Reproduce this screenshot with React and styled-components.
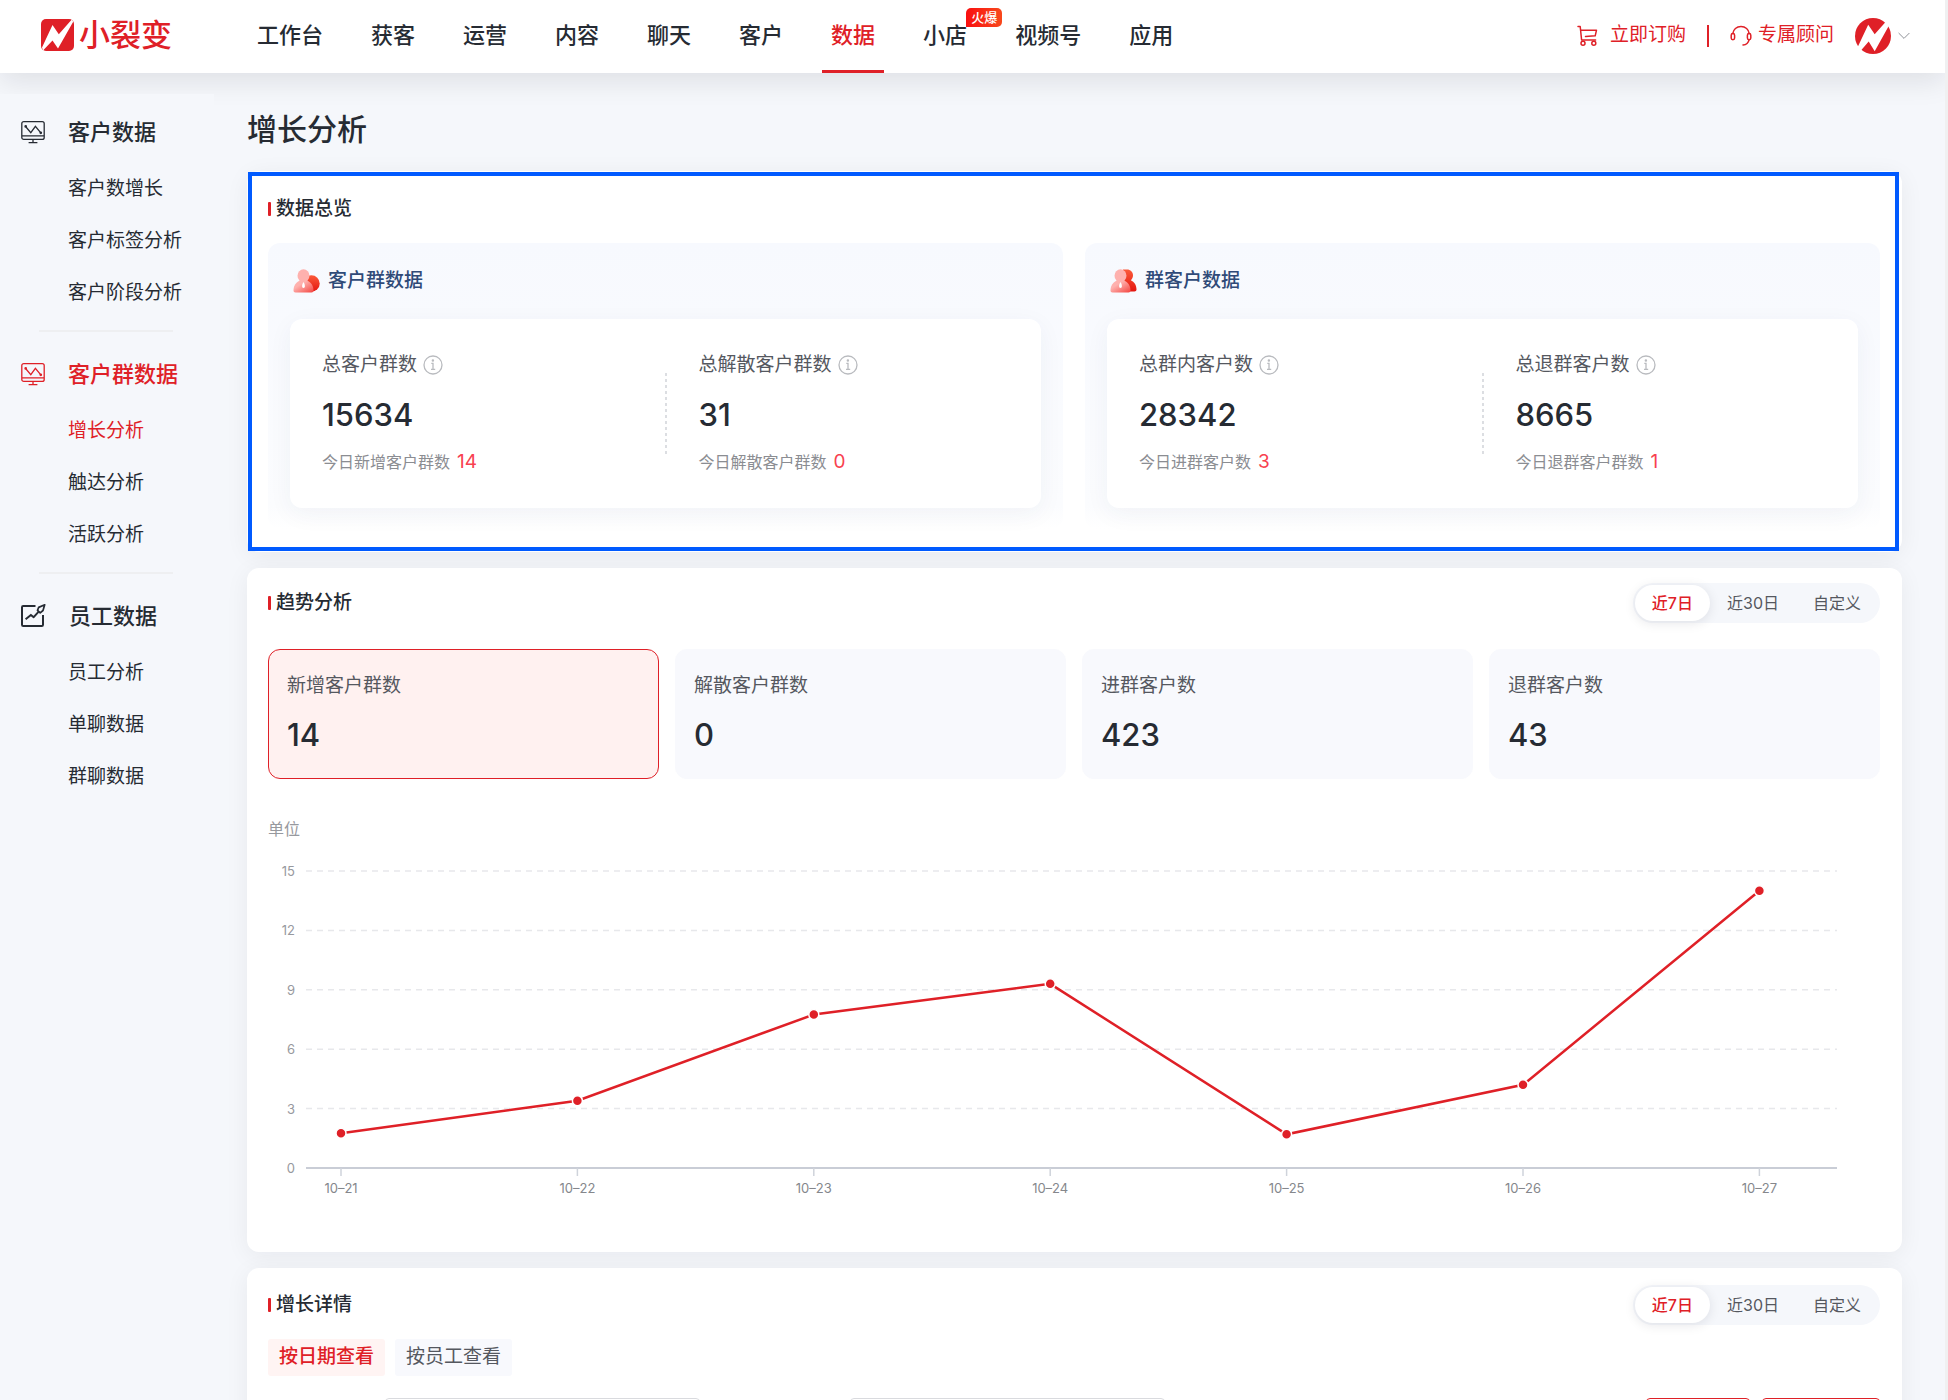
import React, { useState } from "react";
import styled, { createGlobalStyle } from "styled-components";

const RED = "#df2027";
const INK = "#262b33";

const GlobalStyle = createGlobalStyle`
  *, *::before, *::after { box-sizing: border-box; }
  body {
    margin: 0;
    background: #f0f0f1;
    color: ${INK};
    font-family: Inter, "Noto Sans CJK SC", sans-serif;
    line-height: 1.4;
  }
  button, input { font: inherit; color: inherit; }
  button { border: 0; padding: 0; background: none; cursor: pointer; }
  a { color: inherit; text-decoration: none; }
  h1, h2, h3, p, dl, dd, dt, ul { margin: 0; padding: 0; font-weight: inherit; font-size: inherit; }
  ul { list-style: none; }
  svg { display: block; }
`;

const Page = styled.div`
  display: flex;
  flex-direction: column;
  height: 100vh;
  margin-right: 3px;
  overflow: hidden;
  background: #f5f7fb;
`;

/* ---------- header ---------- */

const Header = styled.header`
  position: relative;
  z-index: 1;
  flex: none;
  display: flex;
  align-items: center;
  height: 73px;
  padding: 0 35px 0 41px;
  background: #fff;
  box-shadow: 0 8px 28px rgba(20, 24, 32, 0.1);
`;

const Brand = styled.a`
  display: flex;
  align-items: center;
  gap: 5px;
  width: 207px;
  padding-bottom: 3px;
  color: ${RED};
  font-size: 31px;
  font-weight: 500;
  line-height: 40px;
  white-space: nowrap;
`;

const Nav = styled.nav`
  display: flex;
  align-self: stretch;
  gap: 30px;
`;

const NavLink = styled.a`
  position: relative;
  display: flex;
  align-items: center;
  padding: 0 9px;
  border-bottom: 3px solid ${(p) => (p.$active ? RED : "transparent")};
  color: ${(p) => (p.$active ? RED : INK)};
  font-size: 22px;
  font-weight: 500;
  white-space: nowrap;
`;

const HotBadge = styled.span`
  position: absolute;
  top: 8px;
  left: calc(100% - 10px);
  padding: 0 5px;
  border-radius: 5px 5px 5px 0;
  background: linear-gradient(90deg, #f90f10, #f8481c);
  color: #fff;
  font-size: 13px;
  line-height: 19px;
`;

const HeaderTools = styled.div`
  display: flex;
  align-items: center;
  margin-left: auto;
  padding-bottom: 2px;
  color: ${RED};
  font-size: 19px;
`;

const ToolLink = styled.a`
  display: flex;
  align-items: center;
  gap: ${(p) => p.$gap}px;
  white-space: nowrap;
`;

const ToolDivider = styled.span`
  width: 2px;
  height: 22px;
  margin: 0 21px;
  background: ${RED};
`;

const AccountButton = styled.button`
  display: flex;
  align-items: center;
  gap: 7px;
  margin-left: 21px;
`;

/* ---------- sidebar ---------- */

const Body = styled.div`
  display: flex;
  flex: 1;
  min-height: 0;
`;

const Sidebar = styled.aside`
  position: relative;
  z-index: 2;
  flex: none;
  width: 214px;
  margin-top: 21px;
  padding-top: 9px;
  background: #f5f7fb;
`;

const MenuGroup = styled.section`
  & + &::before {
    content: "";
    display: block;
    height: 2px;
    margin: 11px 41px 13px 39px;
    background: #eeeff1;
  }
`;

const MenuTitle = styled.h2`
  display: flex;
  align-items: center;
  gap: 23px;
  height: 58px;
  padding-left: 21px;
  color: ${(p) => (p.$active ? RED : INK)};
  && { margin-bottom: 2px; font-size: 22px; font-weight: 500; }
`;

const MenuLink = styled.a`
  display: block;
  padding-left: 68px;
  color: ${(p) => (p.$active ? RED : INK)};
  font-size: 19px;
  line-height: 52px;
`;

/* ---------- content ---------- */

const Main = styled.main`
  flex: 1;
  min-width: 0;
  display: flex;
  flex-direction: column;
  gap: 16px;
  padding: 36px 43px 0 33px;
`;

const PageTitle = styled.h1`
  && { margin-bottom: 6px; font-size: 30px; font-weight: 500; }
  line-height: 40px;
`;

const Card = styled.section`
  flex: none;
  position: relative;
  padding: ${(p) => p.$pad};
  border-radius: 12px;
  background: #fff;
  box-shadow: 0 4px 24px rgba(20, 24, 40, 0.06);
`;

const Highlight = styled.div`
  position: absolute;
  inset: 1px 3px 1px 1px;
  border: 4px solid #005aff;
  pointer-events: none;
`;

const CardHead = styled.div`
  display: flex;
  align-items: center;
  justify-content: space-between;
  height: 40px;
`;

const SectionTitle = styled.h2`
  display: flex;
  align-items: center;
  gap: 5px;
  && { font-size: 19px; font-weight: 500; }

  &::before {
    content: "";
    width: 3px;
    height: 14px;
    border-radius: 1px;
    background: ${RED};
  }
`;

const PanelGrid = styled.div`
  display: grid;
  grid-template-columns: 1fr 1fr;
  gap: 22px;
  margin-top: 14px;
`;

const Panel = styled.section`
  padding: 22px 22px 21px;
  border-radius: 12px;
  background: linear-gradient(#f7f9fe, #fbfcfe 92%, #fff);
`;

const PanelTitle = styled.h3`
  display: flex;
  align-items: center;
  gap: 8px;
  height: 32px;
  padding-left: 3px;
  color: #2f4a78;
  && { margin-bottom: 22px; font-size: 19px; font-weight: 500; }
`;

const StatBox = styled.div`
  display: flex;
  align-items: center;
  border-radius: 12px;
  background: #fff;
  box-shadow: 0 6px 24px rgba(30, 50, 90, 0.05);
`;

const Stat = styled.dl`
  flex: 1;
  min-width: 0;
  && { padding: 32px 32px 33px; }
`;

const StatDivider = styled.span`
  width: 2px;
  height: 82px;
  background: repeating-linear-gradient(#dcdee2 0 3px, transparent 3px 6px);
`;

const StatLabel = styled.dt`
  display: flex;
  align-items: center;
  gap: 6px;
  height: 28px;
  color: #55585f;
  font-size: 19px;
`;

const InfoButton = styled.button`
  display: flex;
  color: #b9bbbf;
`;

const BigNumber = styled.dd`
  && { margin-top: 14px; font-size: 31px; font-weight: 500; }
  line-height: 44px;
`;

const StatNote = styled.dd`
  display: flex;
  align-items: center;
  gap: 7px;
  height: 26px;
  color: #8b8d92;
  && { margin-top: 12px; font-size: 16px; }
`;

const NoteCount = styled.span`
  color: #f8414f;
  font-size: 19px;
`;

const Segmented = styled.div`
  display: flex;
  padding: 2px;
  border-radius: 20px;
  background: #f5f7fb;
`;

const Segment = styled.button`
  height: 36px;
  padding: 0 17px;
  border-radius: 18px;
  background: ${(p) => (p.$active ? "#fff" : "transparent")};
  box-shadow: ${(p) => (p.$active ? "0 2px 12px rgba(20, 24, 40, 0.1)" : "none")};
  color: ${(p) => (p.$active ? RED : "#55585f")};
  font-size: 16px;
  font-weight: ${(p) => (p.$active ? 500 : 400)};
  white-space: nowrap;
`;

const MetricGrid = styled.div`
  display: grid;
  grid-template-columns: repeat(4, 1fr);
  gap: 16px;
  margin-top: 26px;
`;

const Metric = styled.button`
  height: 130px;
  padding: 0 18px;
  border: 1px solid ${(p) => (p.$active ? RED : "#f8f9fd")};
  border-radius: 12px;
  background: ${(p) => (p.$active ? "#fff1f0" : "#f8f9fd")};
  text-align: left;
`;

const MetricLabel = styled.span`
  display: block;
  color: #55585f;
  font-size: 19px;
  line-height: 28px;
`;

const MetricValue = styled.span`
  display: block;
  margin-top: 13px;
  font-size: 31px;
  font-weight: 500;
  line-height: 44px;
`;

const UnitLabel = styled.p`
  color: #97999e;
  && { margin-top: 38px; font-size: 16px; }
  line-height: 24px;
`;

const ChartSvg = styled.svg`
  width: 100%;
  height: auto;
  margin-top: 19px;
  overflow: visible;
  font-size: 13px;
`;

const Tabs = styled.div`
  display: flex;
  gap: 10px;
  margin-top: 14px;
`;

const Tab = styled.button`
  height: 37px;
  padding: 0 11px;
  border-radius: 3px;
  background: ${(p) => (p.$active ? "#fff4f3" : "#f8f9fd")};
  color: ${(p) => (p.$active ? RED : "#55585f")};
  font-size: 19px;
  font-weight: ${(p) => (p.$active ? 500 : 400)};
`;

const FilterRow = styled.form`
  display: flex;
  align-items: center;
  gap: 150px;
  margin-top: 22px;
  padding-left: 117px;
`;

const FilterInput = styled.input`
  width: 315px;
  height: 40px;
  border: 1px solid #d9dade;
  border-radius: 4px;
  background: #fff;
`;

const FilterActions = styled.div`
  display: flex;
  gap: 12px;
  margin-left: auto;
`;

const OutlineButton = styled.button`
  width: ${(p) => p.$width}px;
  height: 40px;
  border: 1px solid ${RED};
  border-radius: 4px;
  color: ${RED};
`;

/* ---------- drawings ---------- */

const LogoMark = () => (
  <svg width="33" height="32" viewBox="0 0 33 32" aria-hidden="true">
    <rect width="33" height="32" rx="5" fill={RED} />
    <path
      d="M1 28.5 11.5 6l6.3 9.3L30.8.6l1.4 2.2L17 29.6l-5.500-8L2 31.4z"
      fill="#fff"
    />
  </svg>
);

const Avatar = () => (
  <svg width="36" height="36" viewBox="0 0 36 36" aria-hidden="true">
    <circle cx="18" cy="18" r="18" fill={RED} />
    <path
      d="M2 30.4 13.2 6.7l6.500 9.6L31 3.600l3 3.800L19.700 33.200l-6-9.800L5.500 33z"
      fill="#fff"
    />
  </svg>
);

const ChevronIcon = () => (
  <svg width="12" height="8" viewBox="0 0 12 8" fill="none" stroke="#8f9298" aria-hidden="true">
    <path d="m.6 1 5.400 5.400L11.400 1" />
  </svg>
);

const CartIcon = () => (
  <svg width="21" height="22" viewBox="0 0 21 22" fill="none" stroke="currentColor" strokeWidth="1.5" strokeLinecap="round" strokeLinejoin="round" aria-hidden="true">
    <path d="M1 1.500h2.200l1.400 13.500h14" />
    <path d="M3.700 5.200h15.800l-1.300 5.600-9.700.7" />
    <circle cx="6" cy="18.300" r="2" />
    <circle cx="16.800" cy="18.300" r="2" />
  </svg>
);

const HeadsetIcon = () => (
  <svg width="22" height="22" viewBox="0 0 22 22" fill="none" stroke="currentColor" strokeWidth="1.500" strokeLinecap="round" aria-hidden="true">
    <path d="M2.800 8.600C3.200 4.400 6.600 1.500 11 1.500s7.800 2.900 8.200 7.100" />
    <rect x="1.200" y="8.600" width="3.400" height="6.200" rx="1.700" />
    <rect x="17.400" y="8.600" width="3.400" height="6.200" rx="1.700" />
    <path d="M19 14.800c-.6 3-2.900 4.900-6 5.200" />
  </svg>
);

const MonitorIcon = () => (
  <svg width="24" height="24" viewBox="0 0 24 24" fill="none" stroke="currentColor" strokeWidth="1.300" aria-hidden="true">
    <rect x=".8" y="1.600" width="22.400" height="17.800" rx="2" />
    <path d="M1 15.800h22M12 19.400v3M7.600 22.700h8.800" />
    <path d="m5 7 4.800 5.600 4.600-6.200 5 6" />
    <circle cx="4.700" cy="6.400" r=".7" />
    <circle cx="19.800" cy="12.800" r=".7" />
  </svg>
);

const ReportIcon = () => (
  <svg width="25" height="24" viewBox="0 0 25 24" fill="none" stroke="currentColor" strokeWidth="2" strokeLinejoin="round" aria-hidden="true">
    <path d="M14.500 2H2.200C1.500 2 1 2.500 1 3.200v17.600c0 .7.500 1.200 1.200 1.200h18.600c.7 0 1.200-.5 1.200-1.200V11" />
    <path d="m4.600 15.300 5.300-4.400 2.800 2.300 5.400-6" />
    <path d="m23.700.8-6 2.600-1.200 3 2.700 2.400L22 6.500z" strokeWidth="1.700" />
  </svg>
);

const InfoIcon = () => (
  <svg width="20" height="20" viewBox="0 0 20 20" fill="none" stroke="currentColor" strokeWidth="1.300" aria-hidden="true">
    <circle cx="10" cy="10" r="9" />
    <path d="M8.300 8.300H10v6M8 14.400h4.200" />
    <circle cx="9.900" cy="5.500" r=".6" fill="currentColor" />
  </svg>
);

const PeopleIcon = ({ id, variant }) => (
  <svg width="27" height="24" viewBox="0 0 27 24" aria-hidden="true">
    <defs>
      <linearGradient id={`${id}-back`} x1="0" y1="0" x2="0" y2="1">
        <stop offset="0" stopColor="#fb5a3a" />
        <stop offset="1" stopColor="#e3150f" />
      </linearGradient>
      <linearGradient id={`${id}-front`} x1="0" y1="0" x2="1" y2="1">
        <stop offset=".35" stopColor="#feb1ae" />
        <stop offset="1" stopColor="#f4443f" />
      </linearGradient>
    </defs>
    {variant === "group" ? (
      <circle cx="18.400" cy="14.500" r="8.300" fill={`url(#${id}-back)`} />
    ) : (
      <path
        d="M17 .5c3.500 0 6 2.500 6 5.800 0 2-.8 3.800-2.200 5 3.500 1.500 5.700 5 5.700 9.200 0 1.200-.8 2-2 2H13V.5z"
        fill={`url(#${id}-back)`}
      />
    )}
    <path d="M.5 21.500C.5 15.500 4.600 11 10.500 11s10 4.500 10 10.500c0 1.300-.7 2-2 2h-16c-1.300 0-2-.7-2-2z" fill={`url(#${id}-front)`} />
    <ellipse cx="10.500" cy="6.700" rx="6" ry="6.400" fill="#feb1ae" />
    <path d="M10.500 13c.9 1.300 1.400 2.700 1.400 4 0 1.200-.5 2-1.400 2s-1.400-.8-1.400-2c0-1.300.5-2.700 1.400-4z" fill="#fff" />
  </svg>
);

/* ---------- data ---------- */

const NAV = ["工作台", "获客", "运营", "内容", "聊天", "客户", "数据", "小店", "视频号", "应用"];

const MENU = [
  { title: "客户数据", Icon: MonitorIcon, items: ["客户数增长", "客户标签分析", "客户阶段分析"] },
  { title: "客户群数据", Icon: MonitorIcon, active: true, items: ["增长分析", "触达分析", "活跃分析"] },
  { title: "员工数据", Icon: ReportIcon, items: ["员工分析", "单聊数据", "群聊数据"] },
];

const PANELS = [
  {
    title: "客户群数据",
    variant: "group",
    stats: [
      { label: "总客户群数", value: "15634", note: "今日新增客户群数", count: "14" },
      { label: "总解散客户群数", value: "31", note: "今日解散客户群数", count: "0" },
    ],
  },
  {
    title: "群客户数据",
    variant: "member",
    stats: [
      { label: "总群内客户数", value: "28342", note: "今日进群客户数", count: "3" },
      { label: "总退群客户数", value: "8665", note: "今日退群客户群数", count: "1" },
    ],
  },
];

const METRICS = [
  ["新增客户群数", "14"],
  ["解散客户群数", "0"],
  ["进群客户数", "423"],
  ["退群客户数", "43"],
];

const SERIES = [
  ["10–21", 1.75],
  ["10–22", 3.4],
  ["10–23", 7.75],
  ["10–24", 9.3],
  ["10–25", 1.7],
  ["10–26", 4.2],
  ["10–27", 14],
];

const RANGES = ["近7日", "近30日", "自定义"];

/* ---------- parts ---------- */

function RangePicker() {
  const [range, setRange] = useState(RANGES[0]);
  return (
    <Segmented>
      {RANGES.map((r) => (
        <Segment key={r} type="button" $active={r === range} aria-pressed={r === range} onClick={() => setRange(r)}>
          {r}
        </Segment>
      ))}
    </Segmented>
  );
}

function TrendChart() {
  const left = 38;
  const right = 1569;
  const base = 308;
  const x = (i) => 73 + i * 236.4;
  const y = (v) => base - v * 19.8;
  return (
    <ChartSvg viewBox="0 0 1612 340" role="img" aria-label="趋势分析">
      {[15, 12, 9, 6, 3].map((v) => (
        <line key={v} x1={left} x2={right} y1={y(v)} y2={y(v)} stroke="#e7e8eb" strokeWidth="1.500" strokeDasharray="6 5" />
      ))}
      {[15, 12, 9, 6, 3, 0].map((v) => (
        <text key={v} x="27" y={y(v) + 5} textAnchor="end" fill="#97999e">
          {v}
        </text>
      ))}
      <line x1={left} x2={right} y1={base} y2={base} stroke="#c9cdd6" strokeWidth="2" />
      {SERIES.map(([day], i) => (
        <g key={day}>
          <line x1={x(i)} x2={x(i)} y1={base} y2={base + 8} stroke="#cfd3db" strokeWidth="1.500" />
          <text x={x(i)} y="333" textAnchor="middle" fill="#85878c">
            {day}
          </text>
        </g>
      ))}
      <polyline
        points={SERIES.map(([, v], i) => `${x(i)},${y(v)}`).join(" ")}
        fill="none"
        stroke={RED}
        strokeWidth="2.500"
      />
      {SERIES.map(([day, v], i) => (
        <circle key={day} cx={x(i)} cy={y(v)} r="5" fill={RED} stroke="#fff" strokeWidth="1.500" />
      ))}
    </ChartSvg>
  );
}

export default function App() {
  const [metric, setMetric] = useState(0);
  const [view, setView] = useState("按日期查看");

  return (
    <>
      <GlobalStyle />
      <Page>
        <Header>
          <Brand href="#">
            <LogoMark />
            小裂变
          </Brand>
          <Nav>
            {NAV.map((name) => (
              <NavLink key={name} href="#" $active={name === "数据"}>
                {name}
                {name === "小店" && <HotBadge>火爆</HotBadge>}
              </NavLink>
            ))}
          </Nav>
          <HeaderTools>
            <ToolLink href="#" $gap={12}>
              <CartIcon />
              立即订购
            </ToolLink>
            <ToolDivider />
            <ToolLink href="#" $gap={6}>
              <HeadsetIcon />
              专属顾问
            </ToolLink>
            <AccountButton type="button" aria-label="账号">
              <Avatar />
              <ChevronIcon />
            </AccountButton>
          </HeaderTools>
        </Header>

        <Body>
          <Sidebar>
            {MENU.map(({ title, Icon, active, items }) => (
              <MenuGroup key={title}>
                <MenuTitle $active={active}>
                  <Icon />
                  {title}
                </MenuTitle>
                <ul>
                  {items.map((item) => (
                    <li key={item}>
                      <MenuLink href="#" $active={item === "增长分析"}>
                        {item}
                      </MenuLink>
                    </li>
                  ))}
                </ul>
              </MenuGroup>
            ))}
          </Sidebar>

          <Main>
            <PageTitle>增长分析</PageTitle>

            <Card $pad="18px 22px 23px 21px">
              <CardHead>
                <SectionTitle>数据总览</SectionTitle>
              </CardHead>
              <PanelGrid>
                {PANELS.map((panel) => (
                  <Panel key={panel.title}>
                    <PanelTitle>
                      <PeopleIcon id={panel.variant} variant={panel.variant} />
                      {panel.title}
                    </PanelTitle>
                    <StatBox>
                      {panel.stats.map((s, i) => (
                        <React.Fragment key={s.label}>
                          {i > 0 && <StatDivider />}
                          <Stat>
                            <StatLabel>
                              {s.label}
                              <InfoButton type="button" aria-label="说明">
                                <InfoIcon />
                              </InfoButton>
                            </StatLabel>
                            <BigNumber>{s.value}</BigNumber>
                            <StatNote>
                              {s.note}
                              <NoteCount>{s.count}</NoteCount>
                            </StatNote>
                          </Stat>
                        </React.Fragment>
                      ))}
                    </StatBox>
                  </Panel>
                ))}
              </PanelGrid>
              <Highlight />
            </Card>

            <Card $pad="15px 22px 52px 21px">
              <CardHead>
                <SectionTitle>趋势分析</SectionTitle>
                <RangePicker />
              </CardHead>
              <MetricGrid>
                {METRICS.map(([label, value], i) => (
                  <Metric key={label} type="button" $active={i === metric} aria-pressed={i === metric} onClick={() => setMetric(i)}>
                    <MetricLabel>{label}</MetricLabel>
                    <MetricValue>{value}</MetricValue>
                  </Metric>
                ))}
              </MetricGrid>
              <UnitLabel>单位</UnitLabel>
              <TrendChart />
            </Card>

            <Card $pad="17px 22px 24px 21px">
              <CardHead>
                <SectionTitle>增长详情</SectionTitle>
                <RangePicker />
              </CardHead>
              <Tabs>
                {["按日期查看", "按员工查看"].map((name) => (
                  <Tab key={name} type="button" $active={name === view} aria-pressed={name === view} onClick={() => setView(name)}>
                    {name}
                  </Tab>
                ))}
              </Tabs>
              <FilterRow>
                <FilterInput type="text" aria-label="日期" />
                <FilterInput type="text" aria-label="客户群" />
                <FilterActions>
                  <OutlineButton type="button" $width={104} aria-label="查询" />
                  <OutlineButton type="button" $width={118} aria-label="导出" />
                </FilterActions>
              </FilterRow>
            </Card>
          </Main>
        </Body>
      </Page>
    </>
  );
}
